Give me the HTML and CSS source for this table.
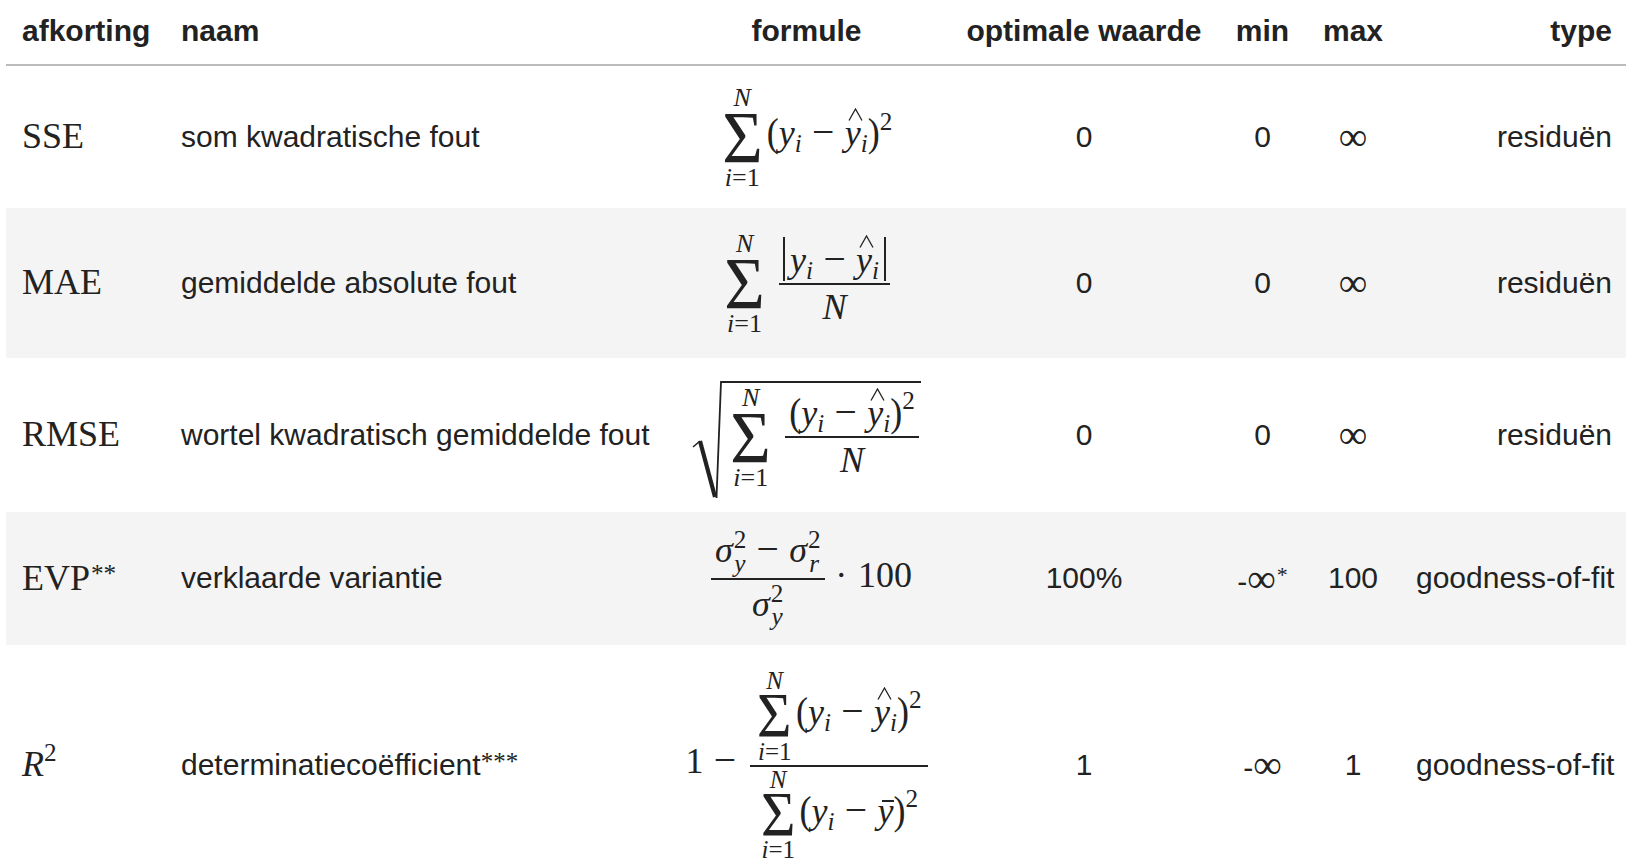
FILE: index.html
```html
<!DOCTYPE html>
<html lang="nl">
<head>
<meta charset="utf-8">
<title>Metrieken</title>
<link rel="stylesheet" href="styles.css">
</head>
<body>
<table class="metrics">
<colgroup>
<col class="c-abbr"><col class="c-name"><col class="c-form"><col class="c-opt"><col class="c-min"><col class="c-max"><col class="c-type">
</colgroup>
<thead>
<tr>
<th class="l">afkorting</th>
<th class="l">naam</th>
<th class="c">formule</th>
<th class="c">optimale waarde</th>
<th class="c">min</th>
<th class="c">max</th>
<th class="r">type</th>
</tr>
</thead>
<tbody>
<tr class="r1">
<td class="l"><span class="m">SSE</span></td>
<td class="l">som kwadratische fout</td>
<td class="c"><span class="m"><span class="op"><span class="lim"><i>N</i></span><span class="sig">Σ</span><span class="lim lo"><i>i</i>=1</span></span><span class="pl">(</span><i>y</i><sub><i>i</i></sub><span class="bin">−</span><span class="hat"><i>y</i><svg class="acc" viewBox="0 0 15 13" width="15" height="13"><path d="M1 12.5 L7.5 1 L14 12.5" stroke="#222" stroke-width="1.3" fill="none"/></svg></span><sub><i>i</i></sub><span class="pl">)</span><sup>2</sup></span></td>
<td class="c">0</td>
<td class="c">0</td>
<td class="c"><span class="m inf">∞</span></td>
<td class="r">residuën</td>
</tr>
<tr class="r2 alt">
<td class="l"><span class="m">MAE</span></td>
<td class="l">gemiddelde absolute fout</td>
<td class="c"><span class="m"><span class="op"><span class="lim"><i>N</i></span><span class="sig">Σ</span><span class="lim lo"><i>i</i>=1</span></span><span class="frac"><span class="num"><span class="abs"><i>y</i><sub><i>i</i></sub><span class="bin">−</span><span class="hat"><i>y</i><svg class="acc" viewBox="0 0 15 13" width="15" height="13"><path d="M1 12.5 L7.5 1 L14 12.5" stroke="#222" stroke-width="1.3" fill="none"/></svg></span><sub><i>i</i></sub></span></span><span class="den"><i>N</i></span></span></span></td>
<td class="c">0</td>
<td class="c">0</td>
<td class="c"><span class="m inf">∞</span></td>
<td class="r">residuën</td>
</tr>
<tr class="r3">
<td class="l"><span class="m">RMSE</span></td>
<td class="l">wortel kwadratisch gemiddelde fout</td>
<td class="c"><span class="m"><span class="sqrt"><svg class="rad" viewBox="0 0 32 118" width="32" height="118"><path d="M1 66 L8 60" stroke="#222" stroke-width="1.6" fill="none"/><path d="M8 60 L23 116" stroke="#222" stroke-width="4.2" fill="none"/><path d="M24.5 117 L29 1 L32 1" stroke="#222" stroke-width="1.8" fill="none"/></svg><span class="radicand"><span class="op"><span class="lim"><i>N</i></span><span class="sig">Σ</span><span class="lim lo"><i>i</i>=1</span></span><span class="frac"><span class="num"><span class="pl">(</span><i>y</i><sub><i>i</i></sub><span class="bin">−</span><span class="hat"><i>y</i><svg class="acc" viewBox="0 0 15 13" width="15" height="13"><path d="M1 12.5 L7.5 1 L14 12.5" stroke="#222" stroke-width="1.3" fill="none"/></svg></span><sub><i>i</i></sub><span class="pl">)</span><sup>2</sup></span><span class="den"><i>N</i></span></span></span></span></span></td>
<td class="c">0</td>
<td class="c">0</td>
<td class="c"><span class="m inf">∞</span></td>
<td class="r">residuën</td>
</tr>
<tr class="r4 alt">
<td class="l"><span class="m">EVP<sup class="ast">**</sup></span></td>
<td class="l">verklaarde variantie</td>
<td class="c"><span class="m"><span class="frac"><span class="num"><i>σ</i><span class="ss"><span>2</span><i>y</i></span><span class="bin">−</span><i>σ</i><span class="ss"><span>2</span><i>r</i></span></span><span class="den"><i>σ</i><span class="ss"><span>2</span><i>y</i></span></span></span><span class="bin dot">·</span>100</span></td>
<td class="c">100%</td>
<td class="c">-<span class="m inf">∞<sup class="ast">*</sup></span></td>
<td class="c">100</td>
<td class="r">goodness-of-fit</td>
</tr>
<tr class="r5">
<td class="l"><span class="m"><i>R</i><sup>2</sup></span></td>
<td class="l">determinatiecoëfficient<span class="star">***</span></td>
<td class="c"><span class="m">1<span class="bin">−</span><span class="frac wide"><span class="num"><span class="op sm"><span class="lim"><i>N</i></span><span class="sig">Σ</span><span class="lim lo"><i>i</i>=1</span></span><span class="pl">(</span><i>y</i><sub><i>i</i></sub><span class="bin">−</span><span class="hat"><i>y</i><svg class="acc" viewBox="0 0 15 13" width="15" height="13"><path d="M1 12.5 L7.5 1 L14 12.5" stroke="#222" stroke-width="1.3" fill="none"/></svg></span><sub><i>i</i></sub><span class="pl">)</span><sup>2</sup></span><span class="den"><span class="op sm"><span class="lim"><i>N</i></span><span class="sig">Σ</span><span class="lim lo"><i>i</i>=1</span></span><span class="pl">(</span><i>y</i><sub><i>i</i></sub><span class="bin">−</span><span class="bar"><i>y</i></span><span class="pl">)</span><sup>2</sup></span></span></span></td>
<td class="c">1</td>
<td class="c">-<span class="m inf">∞</span></td>
<td class="c">1</td>
<td class="r">goodness-of-fit</td>
</tr>
</tbody>
</table>
</body>
</html>
```

FILE: styles.css
```css
html, body {
  margin: 0;
  background: #fff;
}
body {
  padding: 0 6px;
  font-family: "Liberation Sans", Arial, sans-serif;
  color: #222;
}
.metrics {
  border-collapse: separate;
  border-spacing: 0;
  table-layout: fixed;
  width: 1620px;
  font-size: 30px;
}
.c-abbr { width: 159px; }
.c-name { width: 499px; }
.c-form { width: 285px; }
.c-opt { width: 270px; }
.c-min { width: 87px; }
.c-max { width: 94px; }
.c-type { width: 226px; }

thead tr { height: 66px; }
th {
  font-weight: bold;
  line-height: 34px;
  padding: 14px 16px 0;
  vertical-align: top;
  border-bottom: 2px solid #bbb;
  white-space: nowrap;
}
td {
  padding: 0 16px;
  vertical-align: middle;
  line-height: 1.15;
  white-space: nowrap;
}
th.r, td.r { padding-right: 14px; }
.l { text-align: left; }
.c { text-align: center; }
.r { text-align: right; }

.r1 { height: 142px; }
.r2 { height: 150px; }
.r3 { height: 154px; }
.r4 { height: 133px; }
.r5 { height: 240px; }
.alt td { background: #f4f4f4; }

/* math */
.m {
  font-family: "Liberation Serif", "Times New Roman", serif;
  font-size: 36px;
  line-height: 1.15;
  white-space: nowrap;
}
.m.inf { font-size: 40px; }
.m.inf .ast { font-size: 22px; top: -10px; }
.m i { font-style: italic; }
.m sub, .m sup {
  font-size: 0.7em;
  line-height: 0;
  position: relative;
  vertical-align: baseline;
}
.m sub { top: 0.28em; }
.m sup { top: -0.62em; }
.m sup.ast { top: -0.32em; margin-left: 1px; }
.star {
  font-family: "Liberation Serif", "Times New Roman", serif;
  font-size: 25px;
  position: relative;
  top: -5px;
  line-height: 0;
}
.bin {
  display: inline-block;
  margin: 0 0.26em;
  font-size: 1.1em;
  line-height: 1;
}
.bin.dot { font-size: 1em; margin: 0 0.3em; }
.pl {
  display: inline-block;
  line-height: 1;
  transform: scaleY(1.12);
}
.op {
  display: inline-flex;
  flex-direction: column;
  align-items: center;
  vertical-align: middle;
  line-height: 1;
  margin-right: 3px;
}
.lim {
  font-size: 26px;
  line-height: 1;
}
.lim.lo { line-height: 0.9; }
.sig {
  font-size: 74px;
  line-height: 0.75;
  transform: scaleX(0.94);
}
.op.sm .sig {
  font-size: 63px;
}
.op.sm .lim { font-size: 25px; }
.hat {
  position: relative;
  display: inline-block;
  line-height: 1;
}
.acc {
  position: absolute;
  left: 50%;
  top: -7px;
  margin-left: -5px;
  display: block;
}
.bar {
  position: relative;
  display: inline-block;
  line-height: 1;
}
.bar::before {
  content: "";
  position: absolute;
  left: 5px;
  right: -1px;
  top: 7px;
  border-top: 2px solid #222;
}
.abs {
  display: inline-block;
  border-left: 2px solid #222;
  border-right: 2px solid #222;
  padding: 3px 5px 0;
  line-height: 1.1;
}
.frac {
  display: inline-flex;
  flex-direction: column;
  align-items: stretch;
  text-align: center;
  vertical-align: middle;
  margin-left: 10px;
}
.frac .num {
  border-bottom: 2px solid #222;
  padding: 0 4px 2px;
}
.frac .den {
  padding: 2px 4px 0;
}
.frac.wide { margin-left: 4px; }
.frac.wide .num, .frac.wide .den { padding: 0 6px; }
.frac.wide .num { padding-bottom: 2px; }
.ss {
  display: inline-flex;
  flex-direction: column;
  font-size: 0.7em;
  line-height: 0.95;
  vertical-align: 14px;
  margin-left: 1px;
}
.sqrt {
  display: inline-flex;
  align-items: flex-start;
  vertical-align: middle;
  margin-top: 9px;
}
.rad {
  display: block;
  flex: none;
}
.radicand {
  display: inline-flex;
  align-items: center;
  border-top: 2px solid #222;
  margin-left: -1px;
  padding: 2px 2px 0 6px;
}
```
